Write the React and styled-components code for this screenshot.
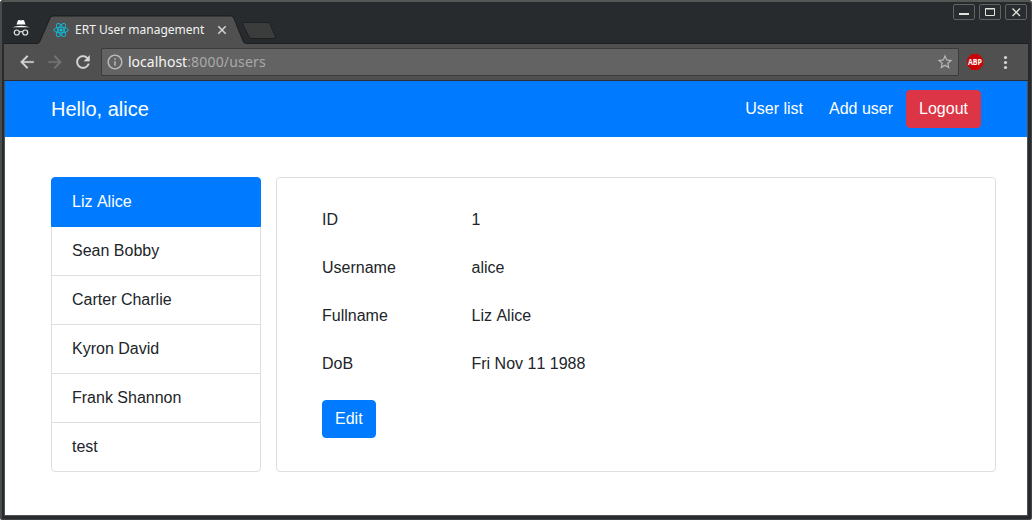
import React from 'react';
import styled, { createGlobalStyle } from 'styled-components';

const Global = createGlobalStyle`
  *, *::before, *::after { box-sizing: border-box; }
  html, body { margin: 0; padding: 0; overflow: hidden; background: #fff; }
`;

const Window = styled.div`
  width: 1032px;
  height: 520px;
  display: flex;
  flex-direction: column;
  padding: 2px 4px 4px;
  background: #272b2d;
  border-radius: 4px 4px 3px 3px;
  box-shadow: inset 2px 0 #4a4b4b, inset 0 2px #555656, inset -1px -1px #414344;
  overflow: hidden;
`;

const TabStrip = styled.header`
  position: relative;
  flex: none;
  display: flex;
  height: 41px;
`;

const StripArt = styled.svg`
  position: absolute;
  inset: 0;
  width: 1024px;
  height: 42px;
`;

const IncognitoSlot = styled.div`
  position: relative;
  width: 49px;
  padding: 17px 0 0 8px;
  svg { display: block; }
`;

const Tab = styled.div`
  position: relative;
  display: flex;
  align-items: center;
  width: 180px;
  height: 27px;
  margin-top: 14px;
  font: 12px/16px 'Noto Sans', sans-serif;
  color: #f2f2f2;
  svg { flex: none; }
`;

const TabTitle = styled.span`
  width: 142px;
  margin-left: 6px;
  white-space: nowrap;
`;

const WindowButtons = styled.div`
  position: relative;
  display: flex;
  gap: 4px;
  margin: 2px 1px 0 auto;
`;

const WindowButton = styled.div`
  width: 22px;
  height: 16px;
  border: 1px solid #606263;
  border-radius: 2px;
  background: #292d2f;
  svg { display: block; }
`;

const Toolbar = styled.div`
  flex: none;
  display: flex;
  align-items: center;
  height: 38px;
  padding: 0 10px 0 13px;
  background: #505050;
  border-bottom: 1px solid #2c2d2d;
  svg { display: block; flex: none; }
`;

const NavIcons = styled.div`
  display: flex;
  gap: 8px;
  width: 84px;
`;

const AddressBar = styled.div`
  display: flex;
  align-items: center;
  width: 858px;
  height: 28px;
  padding: 0 4px;
  border: 1px solid #3b3b3b;
  border-radius: 2px;
  background: #636363;
  color: #aaa;
  font: 14px/20px 'Noto Sans', sans-serif;
`;

const Url = styled.span`
  flex: 1;
  margin-left: 4px;
`;

const Host = styled.span`
  color: #f5f5f5;
`;

const Path = styled.span`
  letter-spacing: 0.18px;
`;

const Extensions = styled.div`
  display: flex;
  align-items: center;
  gap: 12px;
  margin-left: 7px;
`;

const AdBlockBadge = styled.svg`
  width: 18px;
  height: 18px;
  overflow: visible;
`;

const Page = styled.main`
  flex: 1;
  min-height: 0;
  border: solid #505151;
  border-width: 0 1px 1px;
  background: #fff;
  color: #212529;
  font: 16px/24px 'Liberation Sans', Arial, sans-serif;
  font-kerning: none;
`;

const Navbar = styled.nav`
  display: flex;
  align-items: center;
  height: 56px;
  padding: 0 46px;
  background: #007bff;
  color: #fff;
`;

const Brand = styled.div`
  flex: 1;
  font-size: 20px;
  line-height: 30px;
`;

const Button = styled.button`
  height: 38px;
  padding: 0 12px;
  border: 1px solid ${(p) => p.$color};
  border-radius: 4px;
  background: ${(p) => p.$color};
  color: #fff;
  font: inherit;
  font-kerning: none;
`;

const Content = styled.div`
  display: flex;
  align-items: flex-start;
  gap: 15px;
  padding: 40px 31px 0 46px;
`;

const UserList = styled.ul`
  width: 210px;
  margin: 0;
  padding: 0;
  list-style: none;
`;

const UserItem = styled.li`
  height: 50px;
  margin-top: -1px;
  padding: 12px 20px;
  border: 1px solid ${(p) => (p.$active ? '#007bff' : '#dfdfdf')};
  background: ${(p) => (p.$active ? '#007bff' : '#fff')};
  color: ${(p) => (p.$active ? '#fff' : 'inherit')};
  position: relative;
  z-index: ${(p) => (p.$active ? 1 : 0)};
  &:first-child { margin-top: 0; border-radius: 4px 4px 0 0; }
  &:last-child { border-radius: 0 0 4px 4px; }
`;

const Card = styled.section`
  width: 720px;
  height: 295px;
  padding: 30px 45px;
  border: 1px solid #dfdfdf;
  border-radius: 4px;
`;

const Details = styled.dl`
  display: grid;
  grid-template-columns: 149.5px 1fr;
  row-gap: 24px;
  margin: 0 0 24px;
`;

const Term = styled.dt``;

const Value = styled.dd`
  margin: 0;
`;

const Incognito = () => (
  <svg width="18" height="18" viewBox="0 0 18 18">
    <path d="M4.500 5.500 5.800 1.800Q6.200 .8 7.300 1L9 1.500 10.700 1Q11.800 .8 12.200 1.800L13.500 5.500Z" fill="#fff" />
    <path d="M.5 8.300Q4 6.700 9 6.700t8.500 1.600Z" fill="#fff" />
    <g fill="none" stroke="#e8e8e8" strokeWidth="1.200">
      <circle cx="4.800" cy="13.500" r="2.500" />
      <circle cx="13.200" cy="13.500" r="2.500" />
      <path d="M7.300 13.100q1.700-1.100 3.400 0" />
    </g>
  </svg>
);

const ReactLogo = () => (
  <svg width="16" height="16" viewBox="0 0 16 16" fill="none" stroke="#12b5d3" strokeWidth="1">
    <ellipse cx="8" cy="8" rx="7.300" ry="2.800" />
    <ellipse cx="8" cy="8" rx="7.300" ry="2.800" transform="rotate(60 8 8)" />
    <ellipse cx="8" cy="8" rx="7.300" ry="2.800" transform="rotate(120 8 8)" />
    <circle cx="8" cy="8" r="1.500" fill="#12c5e3" stroke="none" />
  </svg>
);

const MaterialIcon = ({ d, size = 20, color = '#d6d6d6', weight = 0 }) => (
  <svg width={size} height={size} viewBox="0 0 24 24" fill={color} stroke={color} strokeWidth={weight}>
    <path d={d} />
  </svg>
);

const BACK = 'M20 11H7.830l5.590-5.590L12 4l-8 8 8 8 1.410-1.410L7.830 13H20v-2z';
const FORWARD = 'M12 4l-1.410 1.410L16.170 11H4v2h12.170l-5.580 5.590L12 20l8-8z';
const RELOAD = 'M17.650 6.350C16.200 4.900 14.210 4 12 4c-4.420 0-7.990 3.580-7.990 8s3.570 8 7.990 8c3.730 0 6.840-2.550 7.730-6h-2.080c-.82 2.330-3.040 4-5.650 4-3.310 0-6-2.690-6-6s2.690-6 6-6c1.660 0 3.140.69 4.220 1.780L13 11h7V4l-2.350 2.350z';
const INFO = 'M11 17h2v-6h-2v6zm1-15C6.480 2 2 6.480 2 12s4.480 10 10 10 10-4.480 10-10S17.520 2 12 2zm0 18c-4.410 0-8-3.590-8-8s3.590-8 8-8 8 3.590 8 8-3.590 8-8 8zM11 9h2V7h-2v2z';
const STAR = 'M22 9.240l-7.190-.62L12 2 9.190 8.630 2 9.240l5.460 4.730L5.820 21 12 17.270 18.180 21l-1.630-7.030L22 9.240zM12 15.400l-3.760 2.270 1-4.280-3.320-2.880 4.380-.38L12 6.100l1.710 4.040 4.380.38-3.320 2.880 1 4.280L12 15.400z';

const AdBlock = () => (
  <AdBlockBadge viewBox="-1 -1 18 18">
    <path d="M4.700 0h6.600L16 4.700v6.600L11.300 16H4.700L0 11.300V4.700Z" fill="#cb0505" />
    <text x="8" y="11" textAnchor="middle" textLength="14" lengthAdjust="spacingAndGlyphs" fill="#fff" fontFamily="Open Sans, sans-serif" fontWeight="700" fontSize="8.400">ABP</text>
  </AdBlockBadge>
);

const Menu = () => (
  <svg width="20" height="16" viewBox="0 0 20 16" fill="#d6d6d6">
    <circle cx="9.500" cy="3.500" r="1.600" />
    <circle cx="9.500" cy="8.500" r="1.600" />
    <circle cx="9.500" cy="13.500" r="1.600" />
  </svg>
);

const users = ['Liz Alice', 'Sean Bobby', 'Carter Charlie', 'Kyron David', 'Frank Shannon', 'test'];

const details = [
  ['ID', '1'],
  ['Username', 'alice'],
  ['Fullname', 'Liz Alice'],
  ['DoB', 'Fri Nov 11 1988'],
];

export default function App() {
  return (
    <Window>
      <Global />
      <TabStrip>
        <StripArt viewBox="0 0 1024 42">
          <path d="M0 41.500H33.500Q35 41.500 36 39L46 16Q47 14 49 14H227Q229 14 230 16.500L239 39Q240 41.500 242 41.500H1024V43H0Z" fill="#505050" />
          <path d="M0 41.500H33.500Q35 41.500 36 39L46 16Q47 14 49 14H227Q229 14 230 16.500L239 39Q240 41.500 242 41.500H1024" fill="none" stroke="#1b1d1e" />
          <path d="M240 20.500H263Q265 20.500 266 22L271.500 34.500Q272 36.500 270 36.500H248Q246 36.500 245 35L239 22.500Q238.500 20.500 240 20.500Z" fill="#3b3c3c" stroke="#1d1f20" />
        </StripArt>
        <IncognitoSlot><Incognito /></IncognitoSlot>
        <Tab>
          <ReactLogo />
          <TabTitle>ERT User management</TabTitle>
          <svg width="10" height="10" viewBox="0 0 10 10" stroke="#d0d0d0" strokeWidth="1.600">
            <path d="M1.300 1.300 8.700 8.700M8.700 1.300 1.300 8.700" />
          </svg>
        </Tab>
        <WindowButtons>
          <WindowButton>
            <svg width="20" height="14"><path d="M5 9h10" stroke="#e3e3dd" strokeWidth="2" /></svg>
          </WindowButton>
          <WindowButton>
            <svg width="20" height="14"><path d="M5.500 3.500h9v7h-9zM5 4h10" fill="none" stroke="#e3e3dd" /></svg>
          </WindowButton>
          <WindowButton>
            <svg width="20" height="14"><path d="m6.500 3.500 7.500 7.500m0-7.500L6.500 11" stroke="#e3e3dd" strokeWidth="1.300" /></svg>
          </WindowButton>
        </WindowButtons>
      </TabStrip>
      <Toolbar>
        <NavIcons>
          <MaterialIcon d={BACK} weight={0.3} />
          <MaterialIcon d={FORWARD} color="#747474" weight={0.3} />
          <MaterialIcon d={RELOAD} weight={0.3} />
        </NavIcons>
        <AddressBar>
          <MaterialIcon d={INFO} size={18} color="#b8b8b8" />
          <Url><Host>localhost</Host><Path>:8000/users</Path></Url>
          <MaterialIcon d={STAR} size={18} color="#b8b8b8" />
        </AddressBar>
        <Extensions>
          <AdBlock />
          <Menu />
        </Extensions>
      </Toolbar>
      <Page>
        <Navbar>
          <Brand>Hello, alice</Brand>
          <Button $color="#007bff">User list</Button>
          <Button $color="#007bff">Add user</Button>
          <Button $color="#dc3545">Logout</Button>
        </Navbar>
        <Content>
          <UserList>
            {users.map((name, i) => (
              <UserItem key={name} $active={i === 0}>{name}</UserItem>
            ))}
          </UserList>
          <Card>
            <Details>
              {details.map(([term, value]) => (
                <React.Fragment key={term}>
                  <Term>{term}</Term>
                  <Value>{value}</Value>
                </React.Fragment>
              ))}
            </Details>
            <Button $color="#007bff">Edit</Button>
          </Card>
        </Content>
      </Page>
    </Window>
  );
}
